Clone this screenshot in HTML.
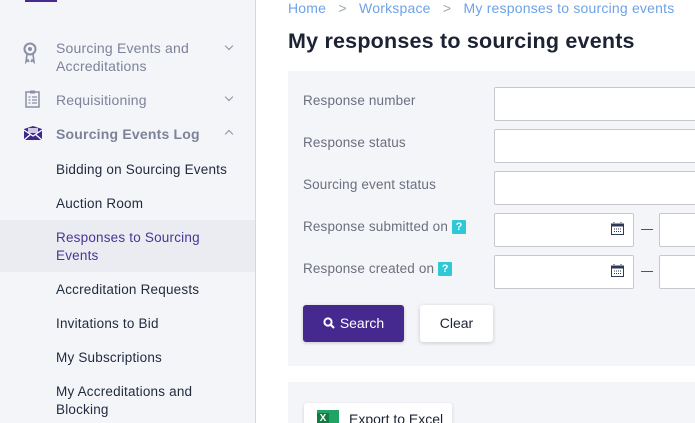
<!DOCTYPE html>
<html><head><meta charset="utf-8"><style>
*{box-sizing:border-box;margin:0;padding:0}
html,body{width:695px;height:423px;overflow:hidden}
body{background:#fff;font-family:"Liberation Sans",sans-serif;font-size:13px;position:relative}
.a{position:absolute;white-space:nowrap}
#side{position:absolute;left:0;top:0;width:256px;height:423px;background:#f4f5f9;border-right:1px solid #d5d7de}
.m{color:#7d8299;font-size:14px;line-height:18px;letter-spacing:.2px}
.s{color:#1f2a3d;font-size:13.5px;line-height:18px;letter-spacing:.2px}
.chev{position:absolute;width:6px;height:6px;border-right:1.3px solid #8a8fa3;border-bottom:1.3px solid #8a8fa3}
.lbl{color:#6b6f7e;font-size:13.5px;letter-spacing:.15px}
.inp{position:absolute;background:#fff;border:1px solid #c6c8d0;border-radius:2px;height:34px}
.q{display:inline-block;width:14px;height:14px;background:#2ec8d6;color:#fff;font-weight:bold;font-size:11px;line-height:14px;text-align:center;border-radius:1px;vertical-align:1px;margin-left:4px}
</style></head><body>
<div id="side">
<div class="a" style="left:25px;top:0;width:32px;height:2px;background:#48298f"></div>
<svg class="a" style="left:22px;top:42px" width="16" height="22" viewBox="0 0 16 22"><circle cx="8" cy="7" r="5.5" fill="none" stroke="#8a8fa3" stroke-width="2"/><circle cx="8" cy="7" r="2" fill="#8a8fa3"/><path d="M5 12 L4 20 L6 18 L7 20 M11 12 L12 20 L10 18 L9 20" stroke="#8a8fa3" stroke-width="1.6" fill="none"/></svg>
<div class="a m" style="left:56px;top:39px">Sourcing Events and<br>Accreditations</div>
<div class="chev" style="left:226px;top:43px;transform:rotate(45deg)"></div>
<svg class="a" style="left:25px;top:90px" width="15" height="18" viewBox="0 0 15 18"><rect x="1" y="2" width="13" height="15" fill="none" stroke="#8a8fa3" stroke-width="1.5"/><rect x="5" y="0.5" width="5" height="3" fill="#8a8fa3"/><path d="M3.5 7h2M7 7h5M3.5 10h2M7 10h5M3.5 13h2M7 13h5" stroke="#8a8fa3" stroke-width="1.3"/></svg>
<div class="a m" style="left:56px;top:91px">Requisitioning</div>
<div class="chev" style="left:226px;top:94px;transform:rotate(45deg)"></div>
<svg class="a" style="left:24px;top:126px" width="18" height="14" viewBox="0 0 18 14"><rect x="0" y="3" width="18" height="11" fill="#3f2a8c"/><path d="M0 3 L9 0 L18 3" fill="#3f2a8c"/><rect x="4" y="2" width="10" height="5" fill="#cfc7ea"/><path d="M0 4 L9 10 L18 4 M0 14 L7 8 M18 14 L11 8" stroke="#fff" stroke-width="1.3" fill="none"/></svg>
<div class="a m" style="left:56px;top:125px;font-weight:bold">Sourcing Events Log</div>
<div class="chev" style="left:226px;top:131px;transform:rotate(-135deg)"></div>
<div class="a s" style="left:56px;top:161px">Bidding on Sourcing Events</div>
<div class="a s" style="left:56px;top:195px">Auction Room</div>
<div class="a" style="left:0;top:220px;width:255px;height:52px;background:#ebecf1"></div>
<div class="a s" style="left:56px;top:229px;color:#4a3594">Responses to Sourcing<br>Events</div>
<div class="a s" style="left:56px;top:281px">Accreditation Requests</div>
<div class="a s" style="left:56px;top:315px">Invitations to Bid</div>
<div class="a s" style="left:56px;top:349px">My Subscriptions</div>
<div class="a s" style="left:56px;top:383px">My Accreditations and<br>Blocking</div>
</div>
<div class="a" style="left:288px;top:0;color:#6ea2e8;font-size:14px;letter-spacing:.2px">Home <span style="color:#9aa">&nbsp;&nbsp;&gt;&nbsp;&nbsp;</span> Workspace <span style="color:#9aa">&nbsp;&nbsp;&gt;&nbsp;&nbsp;</span> My responses to sourcing events</div>
<div class="a" style="left:288px;top:29px;color:#1c2333;font-size:21.5px;font-weight:bold;letter-spacing:.2px">My responses to sourcing events</div>
<div class="a" style="left:288px;top:71px;width:407px;height:295px;background:#f4f5f9"></div>
<div class="a lbl" style="left:303px;top:93px">Response number</div>
<div class="inp" style="left:494px;top:87px;width:210px"></div>
<div class="a lbl" style="left:303px;top:135px">Response status</div>
<div class="inp" style="left:494px;top:129px;width:210px"></div>
<div class="a lbl" style="left:303px;top:177px">Sourcing event status</div>
<div class="inp" style="left:494px;top:171px;width:210px"></div>
<div class="a lbl" style="left:303px;top:219px">Response submitted on<span class="q">?</span></div>
<div class="inp" style="left:494px;top:213px;width:140px"></div>
<div class="a lbl" style="left:303px;top:261px">Response created on<span class="q">?</span></div>
<div class="inp" style="left:494px;top:255px;width:140px"></div>
<svg class="a" style="left:611px;top:222px" width="13" height="13" viewBox="0 0 13 13"><rect x="0.5" y="2" width="12" height="10.5" fill="none" stroke="#2f3a55"/><rect x="0.5" y="2" width="12" height="2.5" fill="#2f3a55"/><path d="M3 0v3M10 0v3M3 7h7M3 9.5h7" stroke="#2f3a55" stroke-dasharray="1 1"/></svg>
<svg class="a" style="left:611px;top:264px" width="13" height="13" viewBox="0 0 13 13"><rect x="0.5" y="2" width="12" height="10.5" fill="none" stroke="#2f3a55"/><rect x="0.5" y="2" width="12" height="2.5" fill="#2f3a55"/><path d="M3 0v3M10 0v3M3 7h7M3 9.5h7" stroke="#2f3a55" stroke-dasharray="1 1"/></svg>
<div class="a" style="left:641px;top:229px;width:12px;height:1px;background:#555"></div>
<div class="a" style="left:641px;top:271px;width:12px;height:1px;background:#555"></div>
<div class="inp" style="left:659px;top:213px;width:60px"></div>
<div class="inp" style="left:659px;top:255px;width:60px"></div>
<div class="a" style="left:303px;top:305px;width:101px;height:37px;background:#46298f;border-radius:3px;color:#fff;font-size:14px;line-height:37px;text-align:center;box-shadow:0 1px 3px rgba(0,0,0,.2)"><svg width="12" height="12" viewBox="0 0 12 12" style="vertical-align:-1px;margin-right:5px"><circle cx="5" cy="5" r="3.6" fill="none" stroke="#fff" stroke-width="2"/><path d="M7.5 7.5 L11 11" stroke="#fff" stroke-width="2.2"/></svg>Search</div>
<div class="a" style="left:420px;top:305px;width:73px;height:37px;background:#fff;border-radius:3px;color:#1c2333;font-size:14px;line-height:37px;text-align:center;box-shadow:0 1px 4px rgba(0,0,0,.18)">Clear</div>
<div class="a" style="left:288px;top:382px;width:407px;height:41px;background:#f4f5f9"></div>
<div class="a" style="left:304px;top:403px;width:148px;height:30px;background:#fff;border-radius:3px;box-shadow:0 1px 3px rgba(0,0,0,.15);color:#1c2333;font-size:14px;padding:8px 0 0 45px">Export to Excel</div>
<div class="a" style="left:317px;top:410px;width:22px;height:16px;background:#21a366"></div>
<div class="a" style="left:317px;top:413px;width:12px;height:12px;background:#107c41;color:#fff;font-size:10px;font-weight:bold;text-align:center;line-height:12px">X</div>
</body></html>
